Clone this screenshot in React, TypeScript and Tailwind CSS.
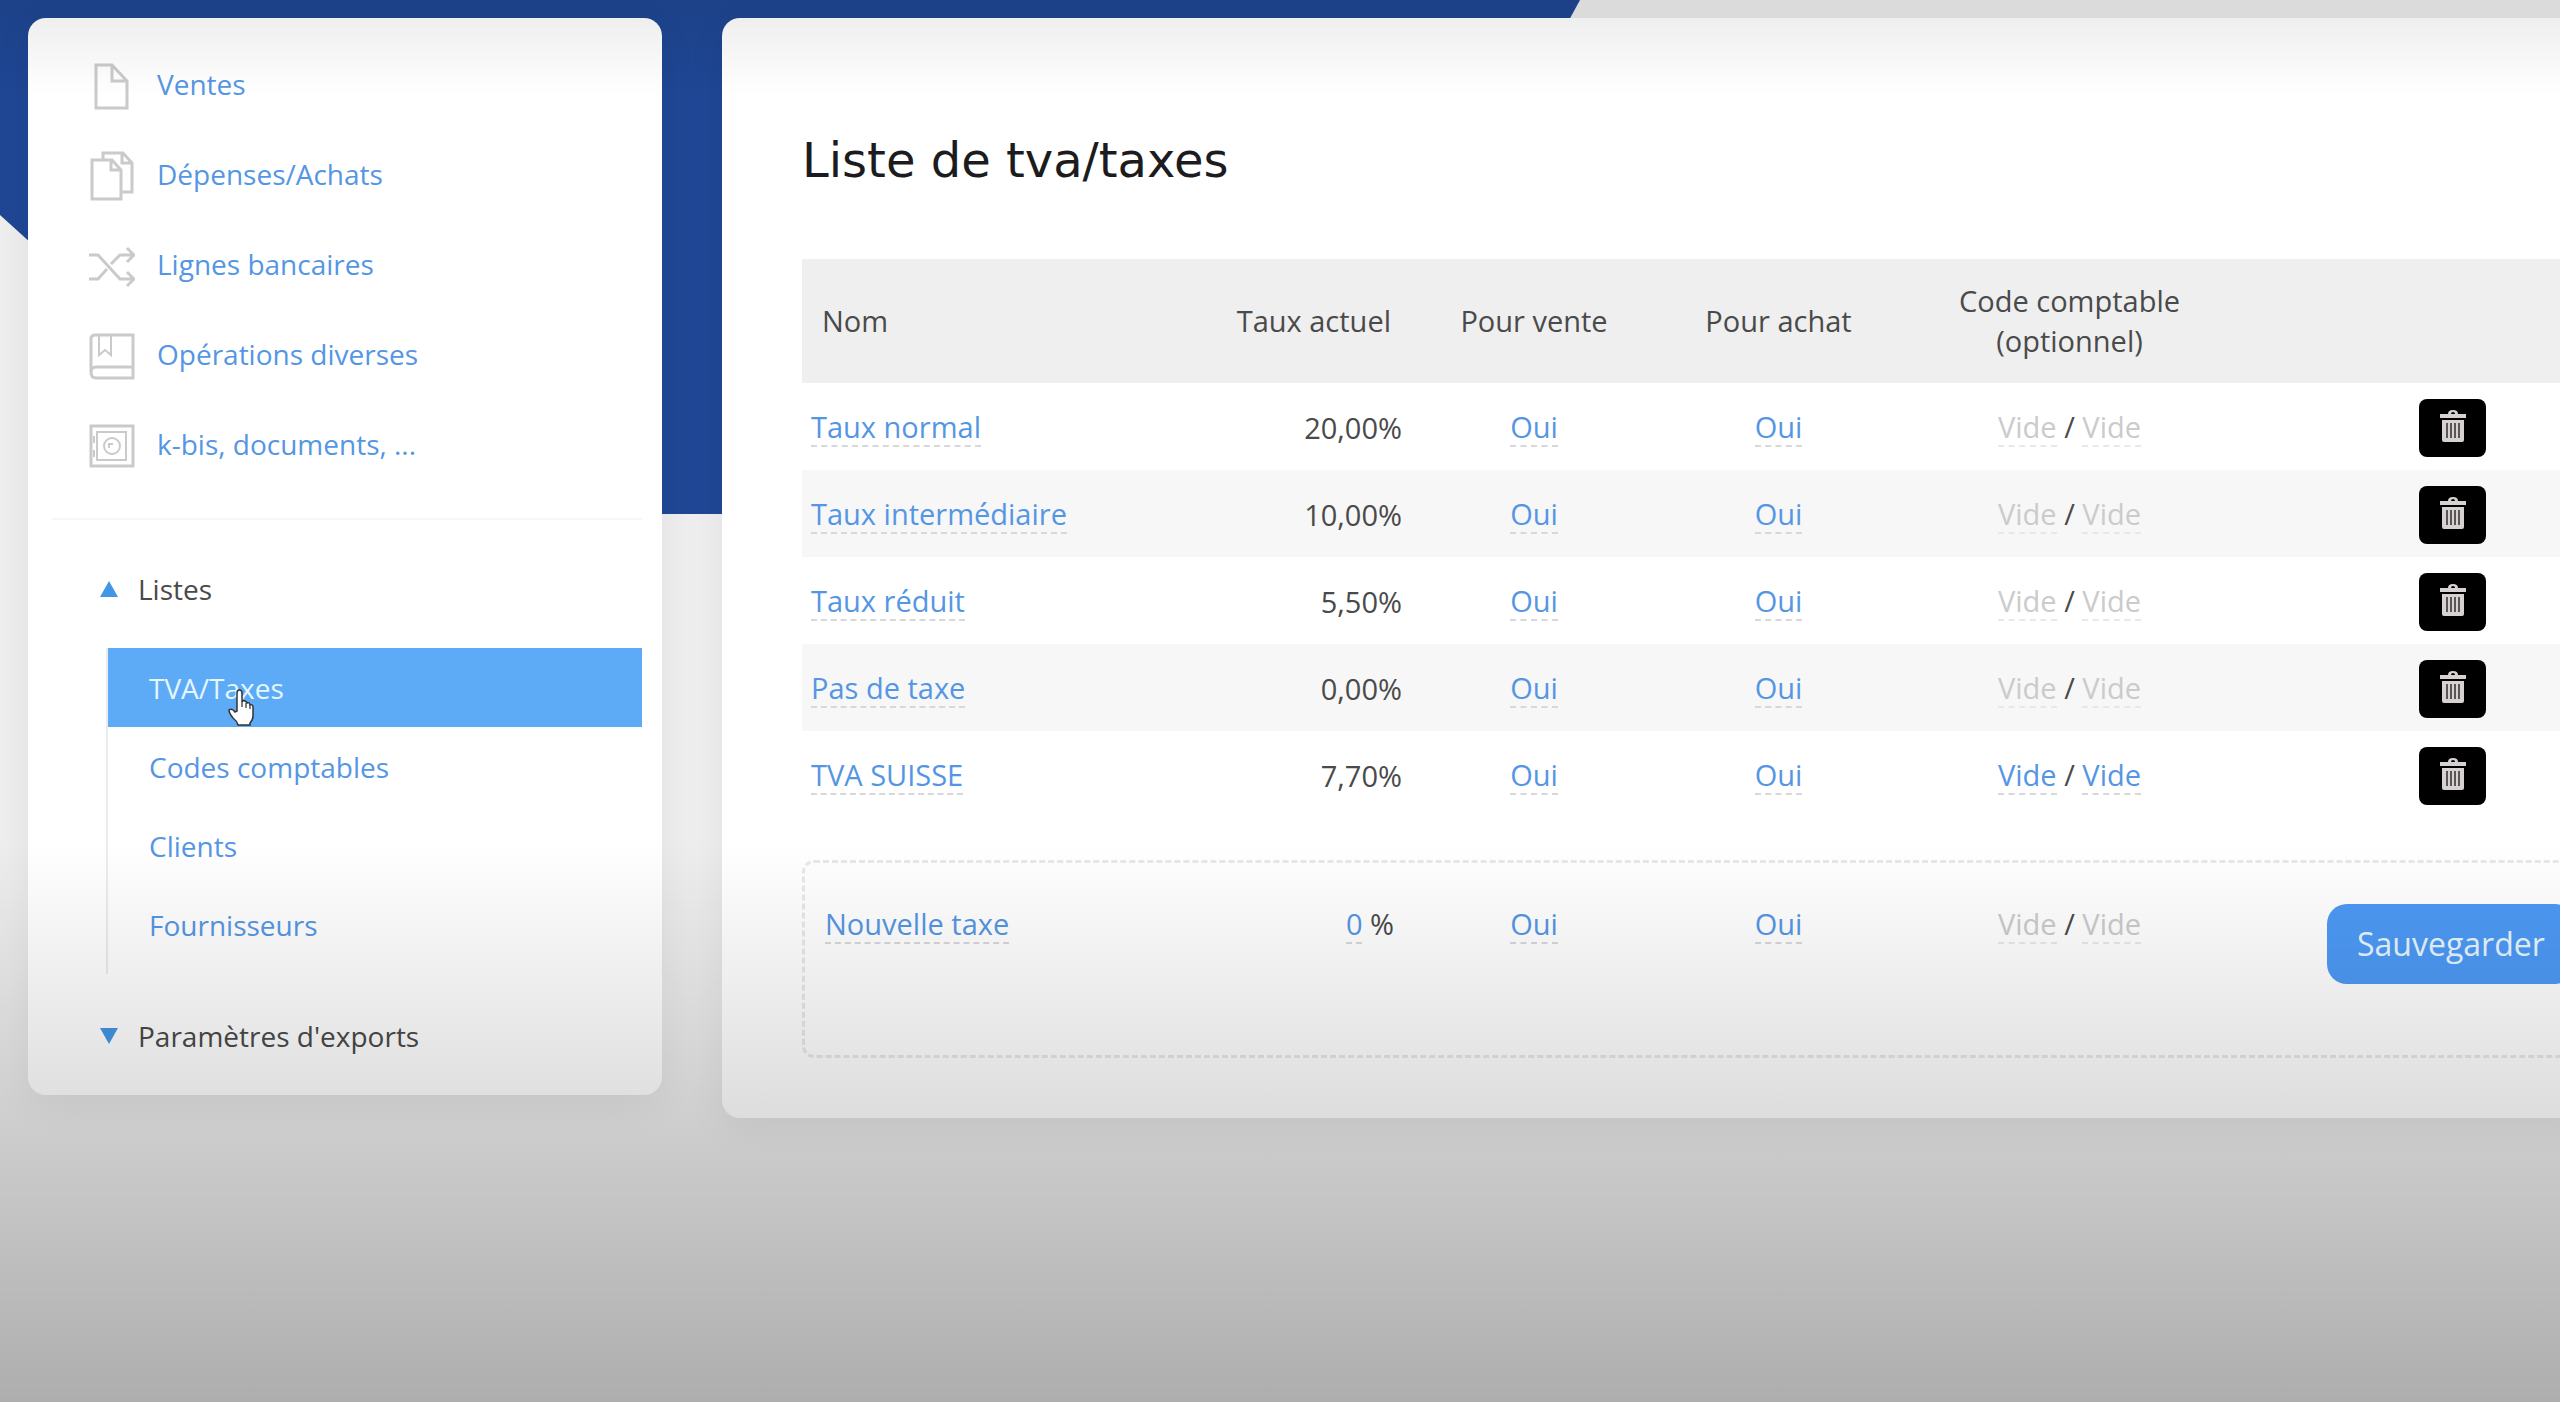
import React from "react";

const stroke = { fill: "none", stroke: "currentColor", strokeWidth: 3 };

function FileIcon() {
  return (
    <svg viewBox="0 0 46 50" className="h-[50px] w-[46px]" {...stroke}>
      <path d="M7 4h16l15 16v27H7zM23 4v16h15" />
    </svg>
  );
}
function FilesIcon() {
  return (
    <svg viewBox="0 0 46 50" className="h-[50px] w-[46px]" {...stroke}>
      <path d="M3 9h20l9 10v29H3zM22 9v10h10M14 9V2h20l9 10v29H32M33 2v10h10" />
    </svg>
  );
}
function ShuffleIcon() {
  return (
    <svg viewBox="0 0 46 50" className="h-[50px] w-[46px]" {...stroke}>
      <path d="M0 14h9l22 24h14M0 38h9l9-10M22 23l9-9h14M38 7l7 7-7 7M38 31l7 7-7 7" />
    </svg>
  );
}
function BookIcon() {
  return (
    <svg viewBox="0 0 46 50" className="h-[50px] w-[46px]" {...stroke}>
      <path d="M6 4h38v43H7q-5 0-5-6V8q0-4 4-4M2 41q0-5 5-5h37" />
      <path d="M10 4v20l6-5 6 5V4" strokeWidth="2" />
    </svg>
  );
}
function SafeIcon() {
  return (
    <svg viewBox="0 0 46 50" className="h-[50px] w-[46px]" {...stroke}>
      <path d="M2 5h42v40H2z" />
      <path d="M8 11h29v28H8zM5 15v7M5 29v7" strokeWidth="2" />
      <circle cx="23" cy="25" r="8" strokeWidth="2" />
      <path d="M20 27v-4h4" strokeWidth="2" />
    </svg>
  );
}
function TrashIcon() {
  return (
    <svg viewBox="0 0 28 34" className="mb-1 h-[34px] w-[28px]">
      <path d="M9 5q0-4 5-4t5 4h8v4H1V5zM12 5h4q0-2-2-2t-2 2" fill="#d6d2d2" fillRule="evenodd" />
      <path d="M3 11h22v20q0 2-2 2H5q-2 0-2-2z" fill="#d6d2d2" />
      <path d="M8 14v15M12 14v15M16 14v15M20 14v15" stroke="#5a5656" strokeWidth="2" />
    </svg>
  );
}
function HandCursor() {
  return (
    <svg viewBox="0 0 26 38" className="pointer-events-none absolute top-[41px] left-[120px] h-[38px] w-[26px]">
      <path
        d="M9 22V4q0-3 2.500-3T14 4v9q1-2 3-1t2 2q3-1 3 2 3-1 3 2v9q0 4-3 7v2H10q-1-4-5-7-4-5-4-8 3-2 6 2z"
        fill="#fff"
        stroke="#333"
        strokeWidth="1.500"
      />
      <path d="M14 13v5M18 14v5M22 16v4" stroke="#555" strokeWidth="1.500" />
    </svg>
  );
}

const nav = [
  { label: "Ventes", Icon: FileIcon },
  { label: "Dépenses/Achats", Icon: FilesIcon },
  { label: "Lignes bancaires", Icon: ShuffleIcon },
  { label: "Opérations diverses", Icon: BookIcon },
  { label: "k-bis, documents, ...", Icon: SafeIcon },
];

const rows = [
  { name: "Taux normal", rate: "20,00%", set: false },
  { name: "Taux intermédiaire", rate: "10,00%", set: false },
  { name: "Taux réduit", rate: "5,50%", set: false },
  { name: "Pas de taxe", rate: "0,00%", set: false },
  { name: "TVA SUISSE", rate: "7,70%", set: true },
];

function Editable({ children, muted = false }: { children: React.ReactNode; muted?: boolean }) {
  return (
    <button
      type="button"
      className={
        muted
          ? "border-b-2 border-dashed border-[#e8e8e8] leading-9 text-[#cbcbcb]"
          : "border-b-2 border-dashed border-[#d8d8dc] leading-9 text-[#5596e4]"
      }
    >
      {children}
    </button>
  );
}

function Codes({ muted }: { muted: boolean }) {
  return (
    <>
      <Editable muted={muted}>Vide</Editable> / <Editable muted={muted}>Vide</Editable>
    </>
  );
}

function Columns({ framed = false }: { framed?: boolean }) {
  return (
    <colgroup>
      <col className={framed ? "w-[398px]" : "w-[401px]"} />
      <col className="w-[208px]" />
      <col className="w-[246px]" />
      <col className="w-[243px]" />
      <col className="w-[339px]" />
      <col />
    </colgroup>
  );
}

function Sidebar() {
  return (
    <aside className="w-[634px] shrink-0 rounded-[18px] bg-white pt-[21px] pr-5 pb-5 pl-6 shadow-[0_10px_40px_rgba(0,0,0,0.06)]">
      <nav>
        <ul className="border-b-2 border-[#f6f6f6] pb-[29px] pl-[37px]">
          {nav.map(({ label, Icon }) => (
            <li key={label}>
              <a href="#" className="flex h-[90px] items-center gap-[22px] text-[#5596e4]">
                <span className="pt-1 text-[#cacaca]">
                  <Icon />
                </span>
                {label}
              </a>
            </li>
          ))}
        </ul>
        <button type="button" className="mt-[29px] flex h-[79px] items-center gap-5 pl-12">
          <svg viewBox="0 0 18 16" className="h-4 w-[18px]">
            <path d="M9 0l9 16H0z" fill="#4396e6" />
          </svg>
          Listes
        </button>
        <ul className="mt-5 ml-[54px] border-l-2 border-[#ebebeb] pb-2.5">
          <li>
            <a href="#" className="relative flex h-[79px] items-center bg-[#5dabf7] pl-[41px] text-[#e6f6ff]">
              TVA/Taxes
              <HandCursor />
            </a>
          </li>
          {["Codes comptables", "Clients", "Fournisseurs"].map((label) => (
            <li key={label}>
              <a href="#" className="flex h-[79px] items-center pl-[41px] text-[#5596e4]">
                {label}
              </a>
            </li>
          ))}
        </ul>
        <button type="button" className="mt-[22px] flex h-[79px] items-center gap-5 pl-12">
          <svg viewBox="0 0 18 16" className="h-4 w-[18px]">
            <path d="M0 0h18L9 16z" fill="#4396e6" />
          </svg>
          Paramètres d'exports
        </button>
      </nav>
    </aside>
  );
}

export default function App() {
  return (
    <div className="relative min-h-screen overflow-hidden bg-[#eeeeee] font-['Open_Sans',sans-serif] text-[28px] leading-10 text-[#4a4a4a]">
      <svg viewBox="0 0 1580 514" className="absolute top-0 left-0 h-[514px] w-[1580px]">
        <path d="M0 0H1580L1300 514H330L0 215z" fill="#1f4795" />
      </svg>
      <div className="relative flex items-start gap-[60px] pt-[18px] pl-7">
        <Sidebar />
        <main className="-mr-10 min-w-0 flex-1 rounded-[18px] bg-white pt-28 pb-[60px] pl-20 text-[29px] shadow-[0_10px_40px_rgba(0,0,0,0.06)]">
          <h1 className="font-['DejaVu_Sans',sans-serif] text-[48px] leading-[60px] text-[#1c1c20]">
            Liste de tva/taxes
          </h1>
          <table className="mt-[69px] w-full table-fixed text-center">
            <Columns />
            <thead>
              <tr className="h-[124px] bg-[#efefef]">
                <th className="pl-5 text-left font-normal">Nom</th>
                <th className="pr-5 text-right font-normal">Taux actuel</th>
                <th className="font-normal">Pour vente</th>
                <th className="font-normal">Pour achat</th>
                <th className="font-normal">
                  Code comptable
                  <br />
                  (optionnel)
                </th>
                <td />
              </tr>
            </thead>
            <tbody>
              {rows.map((r) => (
                <tr key={r.name} className="h-[87px] even:bg-[#f7f7f7]">
                  <td className="pl-[9px] text-left">
                    <Editable>{r.name}</Editable>
                  </td>
                  <td className="pt-0.5 pr-[9px] text-right">{r.rate}</td>
                  <td>
                    <Editable>Oui</Editable>
                  </td>
                  <td>
                    <Editable>Oui</Editable>
                  </td>
                  <td>
                    <Codes muted={!r.set} />
                  </td>
                  <td className="pt-[3px] pl-[180px]">
                    <button
                      type="button"
                      aria-label={`Supprimer ${r.name}`}
                      className="flex h-[58px] w-[67px] items-center justify-center rounded-lg bg-black"
                    >
                      <TrashIcon />
                    </button>
                  </td>
                </tr>
              ))}
            </tbody>
          </table>
          <form
            className="mt-[42px] rounded-xl border-[3px] border-dashed border-[#e8e8e8] pb-[71px]"
            onSubmit={(e) => e.preventDefault()}
          >
            <table className="w-full table-fixed text-center">
              <Columns framed />
              <tbody>
                <tr className="h-[121px]">
                  <td className="pl-5 text-left">
                    <Editable>Nouvelle taxe</Editable>
                  </td>
                  <td className="pr-[17px] text-right">
                    <Editable>0</Editable> %
                  </td>
                  <td>
                    <Editable>Oui</Editable>
                  </td>
                  <td>
                    <Editable>Oui</Editable>
                  </td>
                  <td>
                    <Codes muted />
                  </td>
                  <td className="pt-10 pl-[88px]">
                    <button
                      type="submit"
                      className="flex h-20 items-center rounded-[20px] bg-[#4d99f5] px-[30px] text-[32px] text-[#e6f6ff]"
                    >
                      Sauvegarder
                    </button>
                  </td>
                </tr>
              </tbody>
            </table>
          </form>
        </main>
      </div>
      <div className="pointer-events-none absolute inset-x-0 top-0 h-24 bg-linear-to-b from-black/8 to-transparent" />
      <div className="pointer-events-none absolute inset-x-0 bottom-0 h-[560px] bg-linear-to-t from-black/27 to-transparent" />
    </div>
  );
}
